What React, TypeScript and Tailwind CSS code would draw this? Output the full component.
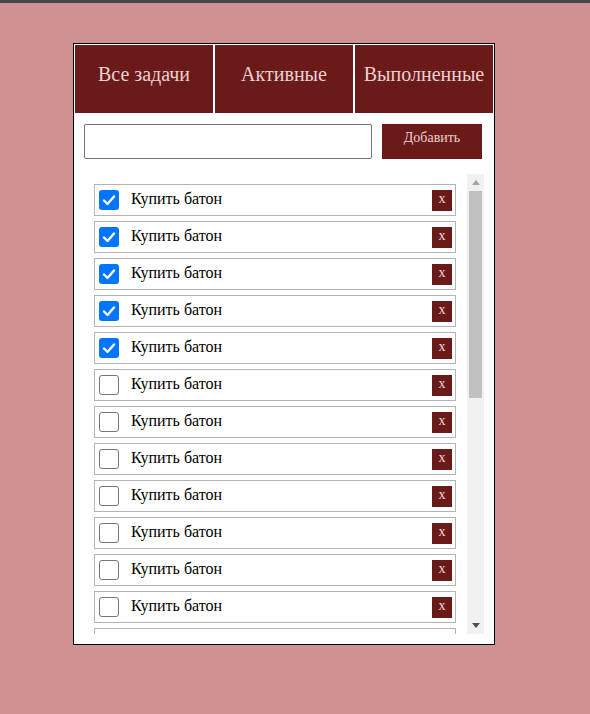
import React from "react";

function CheckBox({ checked }: { checked: boolean }) {
  if (checked) {
    return (
      <div className="w-[20px] h-[20px] rounded-[3px] bg-[#0075ff] flex items-center justify-center shrink-0">
        <svg width="16" height="16" viewBox="0 0 16 16">
          <path d="M3 8.5 L6.5 12 L13 4.5" fill="none" stroke="white" strokeWidth="2.4" strokeLinecap="round" strokeLinejoin="round" />
        </svg>
      </div>
    );
  }
  return <div className="w-[20px] h-[20px] rounded-[3px] border border-[#767676] bg-white shrink-0" />;
}

function Item({ checked }: { checked: boolean }) {
  return (
    <div className="h-[32px] shrink-0 border border-[#b4b4b4] flex items-center pl-[4px] pr-[3px] bg-white">
      <CheckBox checked={checked} />
      <span className="ml-[12px] pb-[2px] text-[16px] leading-[18px] text-black flex-1 font-['Liberation_Serif',serif]">
        Купить батон
      </span>
      <button className="w-[20px] h-[21px] bg-[#6b1a1a] text-[#f0d8d8] text-[14px] leading-[18px] flex items-center justify-center pb-[3px] font-['Liberation_Serif',serif]">
        x
      </button>
    </div>
  );
}

export default function App() {
  const items = Array.from({ length: 13 }, (_, i) => i < 5);
  return (
    <div className="min-h-[714px] bg-[#d09192] font-['Liberation_Serif',serif]">
      <div className="h-[3px] bg-[#4a4450]" />
      <div className="pt-[40px] pl-[73px]">
        <div className="w-[422px] h-[602px] border border-black bg-white p-[1px] flex flex-col">
          <div className="flex gap-[2px] h-[68px]">
            {["Все задачи", "Активные", "Выполненные"].map((t) => (
              <div key={t} className="w-[138px] h-[68px] bg-[#6b1a1a] text-[#ecd0d0] text-[20px] leading-[22px] flex justify-center items-start pt-[18px] whitespace-nowrap font-['Liberation_Serif',serif]">
                {t}
              </div>
            ))}
          </div>
          <div className="flex mt-[11px] ml-[9px] gap-[10px]">
            <input className="w-[288px] h-[35px] border border-[#767676] rounded-[2px] bg-white outline-none" />
            <button className="w-[100px] h-[35px] bg-[#6b1a1a] text-[#ecd0d0] text-[14px] leading-[16px] flex justify-center items-start pt-[6px] font-['Liberation_Serif',serif]">
              Добавить
            </button>
          </div>
          <div className="flex mt-[15px] ml-[9px] h-[460px] w-[400px]">
            <div className="w-[383px] pl-[10px] pr-[11px] pt-[10px] flex flex-col gap-[5px] overflow-hidden">
              {items.map((c, i) => (
                <Item key={i} checked={c} />
              ))}
            </div>
            <div className="w-[17px] h-[460px] bg-[#f1f1f1] flex flex-col items-center">
              <div className="h-[17px] w-full flex items-center justify-center">
                <svg width="8" height="5" viewBox="0 0 8 5"><path d="M0 5 L4 0 L8 5 Z" fill="#a3a3a3" /></svg>
              </div>
              <div className="w-[13px] h-[207px] bg-[#c1c1c1]" />
              <div className="flex-1" />
              <div className="h-[17px] w-full flex items-center justify-center">
                <svg width="8" height="5" viewBox="0 0 8 5"><path d="M0 0 L8 0 L4 5 Z" fill="#505050" /></svg>
              </div>
            </div>
          </div>
        </div>
      </div>
    </div>
  );
}
